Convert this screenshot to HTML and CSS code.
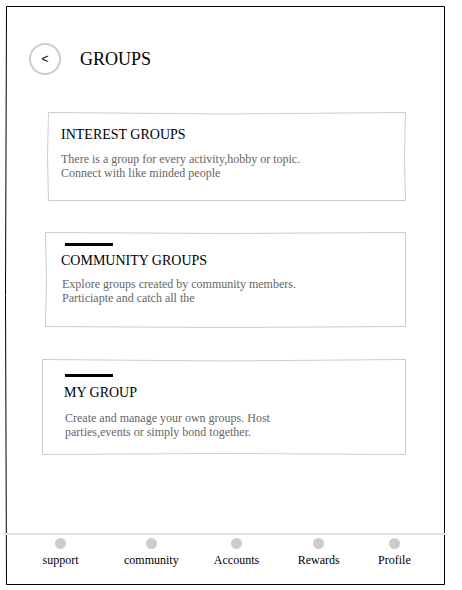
FILE: index.html
```html
<!DOCTYPE html>
<html lang="en">
<head>
  <meta charset="utf-8">
  <meta name="viewport" content="width=device-width, initial-scale=1">
  <title>Groups</title>
  <link rel="stylesheet" href="styles.css">
</head>
<body>
  <div class="screen">
    <svg class="outline outline-screen" viewBox="0 0 439 579" preserveAspectRatio="none" aria-hidden="true">
      <path d="M.5 .5H438.5V578.5H.5Q-1.5 289.5 .5 .5Z"/>
    </svg>
    <header class="header">
      <button class="back" type="button" aria-label="Back">&lt;</button>
      <h1 class="title">GROUPS</h1>
    </header>
    <main class="groups">
      <section class="card card-interest">
        <svg class="outline" viewBox="0 0 358 88" preserveAspectRatio="none" aria-hidden="true">
          <path d="M.5 .5Q179 3.5 357.5 .5Q355.5 44.5 357.5 88.5H.5Q-1.5 44.5 .5 .5Z"/>
        </svg>
        <h2 class="name">INTEREST GROUPS</h2>
        <p class="text">There is a group for every activity,hobby or topic.<br>Connect with like minded people</p>
      </section>
      <section class="card card-community">
        <svg class="outline" viewBox="0 0 361 95" preserveAspectRatio="none" aria-hidden="true">
          <path d="M.5 .5Q180 2.5 360.5 .5V94.5Q180 96.5 .5 94.5Q2.5 47.5 .5 .5Z"/>
        </svg>
        <div class="bar"></div>
        <h2 class="name">COMMUNITY GROUPS</h2>
        <p class="text">Explore groups created by community members.<br>Particiapte and catch all the</p>
      </section>
      <section class="card card-own">
        <svg class="outline" viewBox="0 0 364 96" preserveAspectRatio="none" aria-hidden="true">
          <path d="M.5 .5Q182 3.5 363.5 .5V95.5Q182 93.5 .5 95.5Z"/>
        </svg>
        <div class="bar"></div>
        <h2 class="name">MY GROUP</h2>
        <p class="text">Create and manage your own groups. Host<br>parties,events or simply bond together.</p>
      </section>
    </main>
    <nav class="nav">
      <a class="tab" href="#support"><span class="dot"></span>support</a>
      <a class="tab" href="#community"><span class="dot"></span>community</a>
      <a class="tab" href="#accounts"><span class="dot"></span>Accounts</a>
      <a class="tab" href="#rewards"><span class="dot"></span>Rewards</a>
      <a class="tab" href="#profile"><span class="dot"></span>Profile</a>
    </nav>
  </div>
</body>
</html>
```

FILE: styles.css
```css
* {
  box-sizing: border-box;
}

body {
  margin: 0;
  padding: 6px 17px 5px 6px;
  min-height: 100vh;
  display: flex;
  background: #fff;
  color: #000;
  font-family: "Liberation Serif", "Times New Roman", serif;
}

.screen {
  position: relative;
  flex: 1;
  display: flex;
  flex-direction: column;
}

/* Hand-drawn outline stretched over its container */
.outline {
  position: absolute;
  inset: 0;
  width: 100%;
  height: 100%;
  overflow: visible;
  fill: none;
  stroke: #ccc;
  pointer-events: none;
}

.outline path {
  vector-effect: non-scaling-stroke;
}

.outline-screen {
  stroke: #000;
}

.header {
  display: flex;
  align-items: center;
  gap: 19px;
  padding: 37px 23px 0;
}

.back {
  width: 32px;
  height: 32px;
  padding: 0;
  border: 2px solid #ccc;
  border-radius: 50%;
  background: #fff;
  color: #000;
  font: 12px/14px "Liberation Sans", Arial, sans-serif;
}

.title {
  margin: 0;
  font-size: 18px;
  line-height: 20px;
  font-weight: 400;
}

.groups {
  flex: 1;
  display: flex;
  flex-direction: column;
  gap: 32px;
  padding: 37px 39px 32px 36px;
}

.card {
  position: relative;
}

.card-interest {
  margin-left: 6px;
  padding: 15px 13px 20px;
}

.card-community {
  margin-left: 3px;
  padding: 11px 16px 22px;
}

.card-own {
  padding: 15px 22px 16px;
}

.bar {
  width: 48px;
  height: 3px;
  background: #000;
}

.card-community .bar {
  margin: 0 0 7px 4px;
}

.card-own .bar {
  margin: 0 0 8px 1px;
}

.name {
  margin: 0 0 9px;
  font-size: 14px;
  line-height: 16px;
  font-weight: 400;
}

.card-community .name {
  margin-bottom: 8px;
}

.card-own .name {
  margin-bottom: 10px;
}

.text {
  margin: 0;
  color: #666;
  font-size: 12px;
  line-height: 14px;
}

.card-community .text,
.card-own .text {
  margin-left: 1px;
}

.nav {
  position: relative;
  display: grid;
  grid-template-columns: 93fr 88fr 82fr 82fr 69fr;
  margin-right: -1px;
  padding: 3px 17px 18px 8px;
  border-top: 2px solid #e2e2e2;
}

.tab {
  display: flex;
  flex-direction: column;
  align-items: center;
  gap: 4px;
  color: #000;
  font-size: 12px;
  line-height: 14px;
  text-decoration: none;
}

.dot {
  width: 11px;
  height: 11px;
  border-radius: 50%;
  background: #ccc;
}
```
